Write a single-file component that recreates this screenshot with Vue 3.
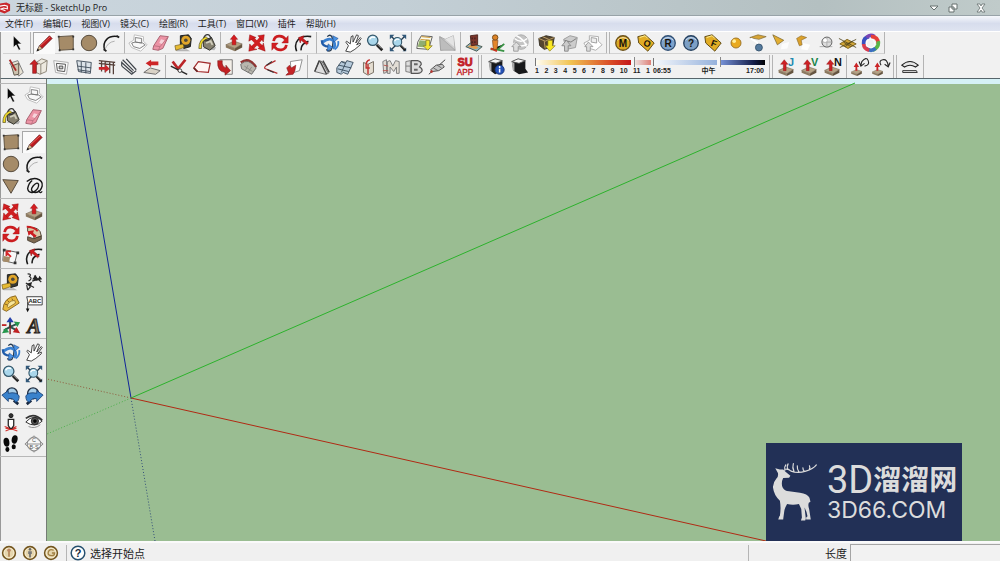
<script setup>
import { ref } from 'vue'

const months = ref(10.3)
const hour = ref(59)
const measure = ref('')

const menus = ['文件(F)', '编辑(E)', '视图(V)', '镜头(C)', '绘图(R)', '工具(T)', '窗口(W)', '插件', '帮助(H)']
const monthLabels = ['1', '2', '3', '4', '5', '6', '7', '8', '9', '10', '11', '1']

const slab = '<path d="M2 13l9-4 9 3-8 5z" fill="#b5a284" stroke="#6a5b48" stroke-width=".6"/><path d="M2 13v3l10 4v-3z" fill="#8b795f"/><path d="M12 17v3l8-4v-4z" fill="#65543f"/>'
const upArrow = '<path d="M11 2l4 5h-2v6H9V7H7z" fill="#d51d20" stroke="#8f1012" stroke-width=".5"/>'
const coin = (t, a, b) => `<circle cx="11" cy="11" r="8" fill="${a}" stroke="${b}" stroke-width="1.5"/><path d="M5 8q6-6 12 0" stroke="#fff" stroke-opacity=".7" fill="none"/><text x="11" y="15" text-anchor="middle" font-family="Liberation Sans, sans-serif" font-size="11" font-weight="bold" fill="#17120a">${t}</text>`
const tag = (t) => `<path d="M2 4l8-2 10 9-7 9L3 11z" fill="#e2ad25" stroke="#57420d"/><path d="M4 5l6-2 3 3" fill="none" stroke="#fff3a0"/><text x="12" y="15" text-anchor="middle" font-family="Liberation Sans, sans-serif" font-size="10" font-weight="bold" fill="#18140a" transform="rotate(20 12 12)">${t}</text>`
const lens = '<path d="M13 13l6 6" stroke="#222" stroke-width="3"/><path d="M13 12l5 5" stroke="#888"/><circle cx="8.5" cy="8" r="5.7" fill="#a9d6eb" stroke="#34576a" stroke-width="1.4"/><path d="M5 7q2-4 6-2" stroke="#fff" fill="none" stroke-width="1.5"/>'
const drop = (t, c) => `<g transform="translate(0 3) scale(.9)">${slab}</g><path d="M8 3l4 5h-2v7H7V8H4z" fill="#ce2024" stroke="#8c1315" stroke-width=".5"/><text x="12" y="10" font-family="Liberation Sans, sans-serif" font-size="12" font-weight="bold" fill="${c}">${t}</text>`
const badge = (d) => `<circle cx="11" cy="11" r="7" fill="#e6d6ae" stroke="#73551f" stroke-width="1.8"/><circle cx="11" cy="11" r="5.4" fill="none" stroke="#f8efd4"/>${d}`

const icons = {
  select: '<path d="M7 3v13l3-3 3 6 2-1-3-6h4z" fill="#080808" stroke="#fff" stroke-width=".6"/>',
  pencil: '<path d="M4 19l2-5L17 3l3 3L9 17z" fill="#bd1b20" stroke="#5b1114" stroke-width=".7"/><path d="M7 14L18 4" stroke="#ef6b61"/><path d="M3 20l3-6 3 3z" fill="#e3c79b" stroke="#333" stroke-width=".5"/><path d="M3 20l1-3 2 2z" fill="#111"/>',
  rect: '<path d="M3 4l16-1v15L4 19z" fill="#a58b68" stroke="#5c4e3d"/><path d="M3 3v2M19 3v2M19 17v2M4 18v2" stroke="#333" stroke-width="2"/>',
  circle: '<circle cx="11" cy="11" r="8.5" fill="#a58b68" stroke="#4d4235"/>',
  arc: '<path d="M4 19C1 9 8 2 19 4" fill="none" stroke="#181818" stroke-width="1.6"/><path d="M4 19Q7 10 15 9" fill="none" stroke="#aaa"/><path d="M3 18l3 2M17 3l3 2" stroke="#222" stroke-width="2"/>',
  polygon: '<path d="M2 4l17 1-8 14z" fill="#a58b68" stroke="#4d4235"/>',
  freehand: '<path d="M3 6q5-4 11-3 7 2 6 8-2 8-9 7-5-2-1-7 4-5 6-2 1 5-6 9-5 1-6-4 1-6 5-9" fill="none" stroke="#171717" stroke-width="1.5"/><path d="M16 16q2 4 4 1" fill="none" stroke="#171717" stroke-width="1.4"/>',
  component: '<path d="M7 2l10 2v5l4 4-7 7-10-4-3-5 5-3z" fill="#fff" stroke="#bbb"/><path d="M8 5l7 1v5l-7-1zM4 11l4-1 8 1 3 2-6 4-7-2z" fill="#f8f8f8" stroke="#777" stroke-width="1"/>',
  eraser: '<path d="M3 14L10 3l9 1-6 13-5 2-6-1z" fill="#ec93a5" stroke="#a45d6b"/><path d="M3 14l7 1 9-11M10 15l-2 4" fill="none" stroke="#bd7281"/><path d="M11 7l4 1-3 4-3-1z" fill="#fff" opacity=".6"/>',
  tape: '<path d="M1 18h13l4 2H3z" fill="#777" opacity=".5"/><path d="M7 3l9-1 3 4-1 9-7 2-4-3z" fill="#393a34" stroke="#171717"/><circle cx="13" cy="8" r="5" fill="#e0a529"/><circle cx="13" cy="8" r="2" fill="#4e493e"/><path d="M1 14l9-2 1 4-9 3z" fill="#e6ba32" stroke="#6c5315" stroke-width=".7"/>',
  paint: '<path d="M6 17l13 2 2-3-6-3z" fill="#777" opacity=".5"/><path d="M7 8l9-3 4 9-6 5-7-4z" fill="#85806f" stroke="#292922"/><path d="M7 8q4 2 9-3M7 7Q8 1 13 2l3 4" fill="none" stroke="#333" stroke-width="1.3"/><path d="M2 17Q2 7 10 4l2 2q-8 2-7 11z" fill="#f2dc28" stroke="#454015" stroke-width=".7"/><path d="M10 11l5-2 2 4" stroke="#d1cebc" fill="none" stroke-width="2"/>',
  push: slab + upArrow,
  move: '<path d="M11 11L5 5M11 11l5-6M11 11l6 5M11 11l-6 6" stroke="#cf2022" stroke-width="4"/><path d="M2 9l1-7 7 3-3 1zM12 3l7-1-1 8-2-3zM12 17l8 3-2-9-1 3zM3 12l-1 8 9-2-4-1z" fill="#d51d20" stroke="#8f1012" stroke-width=".5"/>',
  rotate: '<path d="M4 9c1-7 10-7 13-2M18 13c-1 7-10 7-13 2" fill="none" stroke="#cb1d20" stroke-width="3"/><path d="M20 3v8h-7zM2 19v-8h7z" fill="#d51d20" stroke="#931315" stroke-width=".4"/>',
  offset: '<path d="M4 20C0 10 7 2 20 4M9 19q-1-7 8-10" fill="none" stroke="#1c1c1c" stroke-width="1.7"/><path d="M6 5l6-2-1 3 6 5-2 2-6-5-1 3z" fill="#ce1c20" stroke="#7c1114" stroke-width=".5"/>',
  orbit: '<path d="M8 4q3-3 5 0 3 8-1 15-3 2-5-1" fill="none" stroke="#273b50" stroke-width="1.5"/><path d="M3 10q8-6 12-1 3 5-1 8" fill="none" stroke="#3a80d0" stroke-width="3"/><path d="M2 8q0 7 8 7" fill="none" stroke="#1f5aa8" stroke-width="2.5"/><path d="M14 3l6 3-5 4zM9 12l5 4-6 4z" fill="#4a94e4" stroke="#16458c" stroke-width=".6"/><path d="M20 9q1 6-4 9" fill="none" stroke="#3a80d0" stroke-width="2"/>',
  hand: '<path d="M3 20l3-6-3-4 1-1 4 3 1-8 2-1v7l4-8 2 1-3 8 5-6 1 1-5 7 4-2v2l-6 5-5 3z" fill="#fff" stroke="#222" stroke-width=".9"/>',
  zoom: lens,
  extents: '<path d="M3 3l16 16M19 3L3 19" stroke="#223a50" stroke-width="1.5"/><path d="M2 2h5L2 7zM15 2h5v5zM2 15v5h5zM16 20h4v-4z" fill="#315879"/><g transform="translate(3 3) scale(.85)">' + lens + '</g>',
  prev: '<path d="M14 16l5 4" stroke="#18283f" stroke-width="3"/><circle cx="12" cy="8" r="6" fill="#a5cce8" stroke="#222e40" stroke-width="1.5"/><path d="M1 10l7-5v3q9-2 12 3 0 6-4 7-2-5-8-4v3z" fill="#3982cc" stroke="#173c70" stroke-width=".9"/>',
  next: '<path d="M8 16l-5 4" stroke="#18283f" stroke-width="3"/><circle cx="10" cy="8" r="6" fill="#a5cce8" stroke="#222e40" stroke-width="1.5"/><path d="M21 10l-7-5v3Q5 6 2 11q0 6 4 7 2-5 8-4v3z" fill="#3982cc" stroke="#173c70" stroke-width=".9"/>',
  mapdown: '<path d="M3 10l4-7 12 1-4 14-13-1z" fill="#fafae9" stroke="#555"/><path d="M5 8l10 1-2 7-10-1z" fill="#90ad70"/><path d="M7 4l10 1M6 7l10 1" stroke="#cf962f"/><path d="M12 8h4v6h3l-5 5-5-5h3z" fill="#f5e532" stroke="#796d22" stroke-width=".7"/>',
  terrain: '<path d="M3 4l6 3 9-4 2 16-7-2-9 2z" fill="#cfcfcf" stroke="#aaa"/><path d="M3 4l17 15-16 0z" fill="#bdbdbd" stroke="#999" stroke-width=".7"/><path d="M9 7l9-4 1 12z" fill="#e4e4e4"/>',
  photo: '<path d="M2 15l5-4 13 4-6 5z" fill="#8db4c0" stroke="#435247"/><path d="M4 15l5-3 7 4-3 2z" fill="#e29c4d"/><path d="M7 3l8-1v11l-7 1z" fill="#7b352b" stroke="#4b231d"/><path d="M9 5v2M12 5v2M9 9v2M12 9v2" stroke="#422" stroke-width="1.5"/>',
  person: '<path d="M4 18h8l7-6M10 18l9 2" stroke="#399344" stroke-width="2"/><path d="M4 17l7 3" stroke="#c32" stroke-width="2"/><circle cx="9" cy="5" r="3" fill="#dc8327" stroke="#704515"/><path d="M6 8h6l-1 10H7z" fill="#e4862b" stroke="#7c461a" stroke-width=".7"/>',
  globe: '<circle cx="12" cy="10" r="8" fill="#c4c4c4" stroke="#aaa"/><path d="M5 6q7 6 14 0M4 11q8 6 15 1M7 3q9 4 11 12" fill="none" stroke="#fff" stroke-width="1.6"/><path d="M4 20v-5H2l5-5 5 5H9v5z" fill="#ddd" stroke="#999"/>',
  boxdown: '<path d="M2 6l8-3 9 2-2 10-9 3-5-4z" fill="#56462f" stroke="#332d21"/><path d="M2 6l7 3 10-4M8 9l1 8M6 4l7 3" fill="none" stroke="#c5a56a"/><path d="M12 8h5v6h3l-6 6-5-6h3z" fill="#fae824" stroke="#817521" stroke-width=".7"/>',
  boxup: '<path d="M4 7l7-4 8 2-2 11-10 2z" fill="#ccc" stroke="#999"/><path d="M5 8l7 2 6-4" fill="none" stroke="#777"/><path d="M5 20v-6H2l5-6 5 6H9v6z" fill="#ccc" stroke="#888"/>',
  layersup: '<path d="M7 3l10 1v5l4 4-7 6-10-3-3-5 6-3z" fill="#fff" stroke="#aaa"/><path d="M9 5l6 1v5l-6-1z" fill="#eee" stroke="#999"/><path d="M4 20v-5H2l4-5 5 5H8v5z" fill="#ddd" stroke="#999"/>',
  coinM: coin('M', '#dba923', '#6b511b'),
  tagO: tag('O'),
  coinR: coin('R', '#7da2cc', '#315074'),
  coinQ: coin('?', '#7c9fc5', '#26415f'),
  tagF: tag('F'),
  sun: '<circle cx="11" cy="11" r="5.5" fill="#e9aa20" stroke="#987022"/><circle cx="9" cy="9" r="2" fill="#ffef9b"/>',
  planelight: '<path d="M2 5l9-3 9 2-8 3z" fill="#d7a536" stroke="#77602c" stroke-width=".7"/><path d="M3 6l8 5" stroke="#fff" stroke-width="2"/><circle cx="12" cy="16" r="3.8" fill="#557a9d" stroke="#35536d"/>',
  cone: '<path d="M12 12l8-2-2 7-7 1z" fill="#fff" opacity=".8"/><path d="M2 2l12 6-7 5z" fill="#e3ae31" stroke="#77632c" stroke-width=".8"/>',
  spot: '<path d="M11 11l8 2-3 6-7-1z" fill="#fff" opacity=".9"/><path d="M4 6l5-3 6 2-6 3 1 5-3 1z" fill="#dba12b" stroke="#8b6a2b" stroke-width=".7"/>',
  sphere: '<path d="M4 15h14" stroke="#aaa"/><circle cx="12" cy="10" r="5.5" fill="#ddd" stroke="#555"/><path d="M7 10h10M12 5v10" stroke="#aaa"/><circle cx="10" cy="8" r="2" fill="#fff"/>',
  mesh: '<path d="M2 12l8-5 10 5-9 5z" fill="#d0a536" stroke="#79601e"/><path d="M1 6l19 10M2 16L20 7M6 10l8 5M8 15l8-6" stroke="#4d431f" stroke-width=".9"/>',
  swirl: '<g fill="none" stroke-width="4"><path d="M3 13Q2 5 9 4" stroke="#3a50c0"/><path d="M6 5q4-4 9-1" stroke="#7a45b4"/><path d="M11 4q8 0 8 8" stroke="#e53e38"/><path d="M19 9q1 7-6 10" stroke="#58b548"/><path d="M16 17q-5 4-10 0" stroke="#3a6fc0"/><path d="M9 19q-6-2-6-7" stroke="#d83c50"/></g><path d="M7 8q6-4 8 3M15 10q1 6-5 6M10 16q-6-1-3-8" fill="none" stroke="#fff"/>',
  wallpen: '<path d="M4 7l9-3 6 13-5 4z" fill="#e8e2d4" stroke="#777"/><path d="M6 10l8-3v12l-5 1z" fill="#ccc2ae" stroke="#554c40"/><path d="M4 3l7 12" stroke="#a92725" stroke-width="2"/>',
  wallup: '<path d="M8 6l6-4 6 2-1 12-7 3-4-2z" fill="#ede9df" stroke="#877f71"/><path d="M8 6l5 2 7-4M13 8v11" fill="none" stroke="#877f71"/><path d="M6 3l4 5H8v10H4V8H1z" fill="#c92225" stroke="#711416" stroke-width=".6"/>',
  wallhole: '<path d="M3 4l16 2-2 13-12-2z" fill="#fafafa" stroke="#aaa"/><path d="M6 7l10 1-1 8-8-1z" fill="#fff" stroke="#444"/><path d="M9 10h4v3H9z" fill="#ccc" stroke="#444"/>',
  grid: '<path d="M3 4l16 2-1 12-13-2z" fill="#dce3e9" stroke="#3e4b58"/><path d="M8 5v12M13 6v12M4 10l15 2M4 14l14 2" stroke="#3e4b58"/>',
  fence: '<path d="M2 4l18 2M2 7l18 2M5 4v12M9 5v12M14 6v12M18 6v13" stroke="#554039" stroke-width="1.4"/><path d="M2 11h7V8l5 5-5 4v-3H2z" fill="#ca272b"/>',
  stairs: '<path d="M3 10l11 9 5-4M3 6l12 11M4 3l12 12M8 2l11 12M3 10V5" fill="none" stroke="#3e4349" stroke-width="1.3"/>',
  plate: '<path d="M2 17l7-5 11 3-5 4z" fill="#dad3c7" stroke="#666"/><path d="M4 7l6-4v2h8v4h-8v2z" fill="#cd2527"/>',
  check: '<path d="M4 5l6 8 8-10" fill="none" stroke="#bb2528" stroke-width="3"/><path d="M2 10l18 9" stroke="#262626" stroke-width="1.5"/><circle cx="12" cy="15" r="2" fill="#fff" stroke="#333"/>',
  face: '<path d="M2 12l5-7 13 2-2 10-12-1z" fill="#fff5f2" stroke="#a12a2b" stroke-width="1.3"/><path d="M2 12l4 4" stroke="#6b2222" stroke-width="2"/>',
  bend: '<path d="M5 3h14v16h-7" fill="#f3efe8" stroke="#555" stroke-width=".8"/><path d="M3 4h5q-1 6 4 8V9l5 6-6 5v-3Q2 16 3 4z" fill="#c22123" stroke="#751416" stroke-width=".6"/>',
  arch: '<path d="M3 8q8-8 17 4l-5 7-11-6z" fill="#b9b7ae" stroke="#666"/><path d="M3 6q9-7 17 5" fill="none" stroke="#8f3432" stroke-width="2.4"/><path d="M7 10l9 6M11 9l-3 6M15 11l-4 6" stroke="#8a8a84"/>',
  angle: '<path d="M16 4L5 10q-2 2 0 3l13 5" fill="none" stroke="#b32a2b" stroke-width="1.3"/><path d="M12 5L6 9M7 14l7 3" stroke="#333" stroke-width="1.2"/>',
  fold: '<path d="M7 5l13-2-3 12-9 3z" fill="#fff" stroke="#888"/><path d="M3 12l3-3 2 3 5-3-1 6-2 4-8 1 3-3z" fill="#c52527" stroke="#7d1518" stroke-width=".6"/>',
  boards: '<path d="M3 16L8 4l3 1 7 13-3 1z" fill="#dedede" stroke="#666"/><path d="M8 4l-5 12M9 5l7 14M12 4l7 13" stroke="#444" stroke-width="1.6"/>',
  windows: '<path d="M2 12l5-7 5 1 1-2 7 2-6 13-5-2-2 2-5-2z" fill="#b7cbdc" stroke="#394c5d"/><path d="M12 6l-5 11M4 9l14 3M3 13l12 3M7 5l4 2" stroke="#394c5d"/>',
  wallcut: '<path d="M6 6l5 2 6-3v12l-6 3-5-3z" fill="#e4ddd1" stroke="#70675c"/><path d="M11 8v11M13 3q-5 1-4 9h4" fill="none" stroke="#c13331" stroke-width="1.6"/>',
  blockM: '<path d="M2 5l4-2v14l-3 1z" fill="#e2ddd5" stroke="#777"/><path d="M7 18V5l3-1 3 6 3-6 4 1v13h-3v-7l-3 5-4-5v7z" fill="#e2ddd5" stroke="#777"/><path d="M2 15h6M3 9l5 1" stroke="#b75650"/>',
  blockB: '<path d="M2 5l5-1v13l-5-1zM2 10h5" fill="#ddd" stroke="#777"/><path d="M8 4h7q4 1 4 4l-2 3q3 1 3 4-1 3-5 3H8z" fill="#ddd" stroke="#555" stroke-width="1.3"/><path d="M11 7h4v2h-4zM11 13h4v2h-4z" fill="#666"/>',
  rope: '<path d="M2 19L20 3" stroke="#333"/><path d="M4 14l6-5 7-1 2 3-6 4-7 1z" fill="#c7c7c7" stroke="#4c4c4c"/><path d="M7 12l5 3M11 9l5 3" stroke="#666"/><circle cx="5" cy="16" r="1.5" fill="#b63833"/>',
  suapp: '<text x="11" y="10" text-anchor="middle" font-family="Liberation Sans, sans-serif" font-size="12" font-weight="bold" fill="#c32026" stroke="#c32026" stroke-width=".9">SU</text><text x="11" y="20" text-anchor="middle" font-family="Liberation Sans, sans-serif" font-size="9" fill="#c32026" stroke="#c32026" stroke-width=".4">APP</text>',
  cubeinfo: '<path d="M3 5l7-3 8 2v11l-8 4-5-4z" fill="#18191b"/><path d="M3 5l7-3 8 2-7 3z" fill="#f5f5f5" stroke="#555"/><path d="M3 5l3 2v9l-2-2z" fill="#aaa"/><circle cx="15" cy="14" r="5" fill="#2552b7" stroke="#183577"/><path d="M15 10v2M15 13v4" stroke="#fff" stroke-width="1.7"/>',
  cubeshadow: '<path d="M3 5l7-3 8 2v9l3 4-10 2-6-4z" fill="#18191b"/><path d="M3 5l7-3 8 2-7 3z" fill="#f5f5f5" stroke="#555"/><path d="M3 5l3 2v9l-2-2z" fill="#aaa"/>',
  dropJ: drop('J', '#1f8ab0'),
  dropV: drop('V', '#168347'),
  dropN: drop('N', '#111'),
  curveL: '<g transform="translate(0 8) scale(.65)">' + slab + '</g><path d="M7 6l3 5H8v4H6v-4H4z" fill="#cb2427"/><path d="M12 9l1-4q5-6 7-1t-4 6M10 5l2 5 4-3" fill="none" stroke="#252525" stroke-width="1.2"/>',
  curveR: '<g transform="translate(0 8) scale(.65)">' + slab + '</g><path d="M7 6l3 5H8v4H6v-4H4z" fill="#cb2427"/><path d="M11 9q-3-5 2-6t6 7M15 8l4 3 2-5" fill="none" stroke="#252525" stroke-width="1.2"/>',
  soft: '<path d="M2 9q9-8 18 0l-3 2q-6-4-12 0z" fill="#e7e7e7" stroke="#222" stroke-width="1.2"/><path d="M3 15h15l1 2H3z" fill="#eee" stroke="#222"/>',
  follow: '<path d="M4 14l6 2 9-3v4l-8 4-7-3z" fill="#7d6850" stroke="#463a2e"/><path d="M4 4q14-2 15 9l-8 3Q11 9 4 8z" fill="#dbc8a7" stroke="#44392c"/><path d="M3 3q8 0 12 5" fill="none" stroke="#cb1d20" stroke-width="2"/><path d="M4 8l7-1-1 3 4 3-2 2-5-4-2 2z" fill="#cb1d20"/>',
  scale: '<path d="M3 4l15 3-3 12L2 16z" fill="#f8f8f8" stroke="#555"/><path d="M3 11l7 1-1 6-7-1z" fill="#a58b68"/><path d="M11 12l-5-5M6 11V6h5" stroke="#d22629" fill="none" stroke-width="2"/><path d="M2 3h3v3H2M17 6h3v3h-3M14 17h3v3h-3" fill="#333"/>',
  dimension: '<path d="M4 20l4-5M2 12l9 5M11 4l8 7M9 10l9-3M4 2q5 0 2 3 4 2-1 5M3 14l1 6" fill="none" stroke="#282828" stroke-width="1.3"/><path d="M13 3l2 7-6-2zM3 13l6-2-2 6zM17 4l3 4-5 1z" fill="#222"/>',
  protractor: '<path d="M2 17Q3 4 16 2l4 8-14 9z" fill="#e7b83c" stroke="#82601f"/><path d="M7 14q0-6 8-7l1 3-8 5z" fill="#f8e69b" stroke="#82601f" stroke-width=".8"/><path d="M4 11l3 1M7 7l2 2M12 5l1 2" stroke="#82601f"/>',
  label: '<path d="M3 3h17v9H5z" fill="#fff" stroke="#333"/><path d="M4 9v9" stroke="#333"/><path d="M2 16h4l-2 4z" fill="#111"/><text x="12" y="10" text-anchor="middle" font-family="Liberation Sans, sans-serif" font-size="6.5" font-weight="bold" fill="#222">ABC</text>',
  axes: '<path d="M10 13V6M10 12l8 4M10 12l7-3M10 12l-7 4" stroke="#2a514c" stroke-width="2.2"/><path d="M6 7l4-6 4 6z" fill="#233fa9"/><path d="M10 10v10" stroke="#7a1a1a" stroke-width="1.5"/><path d="M17 12l4 7-8-1z" fill="#bf2223"/><path d="M14 6l7 1-3 5zM5 13l-4 6 8-1z" fill="#25964c"/><path d="M1 10h5" stroke="#bf2223" stroke-width="2"/>',
  text3d: '<text x="11" y="19" text-anchor="middle" font-family="Liberation Serif, serif" font-size="22" font-weight="bold" font-style="italic" fill="#8d7c66" stroke="#2a251f" stroke-width="1.2">A</text>',
  camera: '<path d="M4 16l14 5M17 16L5 21M5 18h12" stroke="#d13532" stroke-width="1.2"/><circle cx="11" cy="4" r="2.2" fill="#333" stroke="#111"/><path d="M8 8h6v7l-2 3h-2l-2-3z" fill="#fff" stroke="#222" stroke-width="1.4"/>',
  eye: '<path d="M2 11q9-10 18-1-8 8-18 1z" fill="#fff" stroke="#222"/><path d="M2 7q9-7 18 2" fill="none" stroke="#333" stroke-width="2"/><circle cx="12" cy="10" r="4" fill="#555" stroke="#222"/><circle cx="12" cy="10" r="2" fill="#050505"/><path d="M5 16q7 3 13-2" stroke="#888" fill="none"/>',
  feet: '<ellipse cx="6" cy="9" rx="3.2" ry="5" fill="#080808" transform="rotate(-8 6 9)"/><ellipse cx="7" cy="17" rx="2.2" ry="2.7" fill="#080808"/><ellipse cx="15" cy="6" rx="3.2" ry="4.7" fill="#080808" transform="rotate(12 15 6)"/><ellipse cx="14" cy="14" rx="2.3" ry="2.8" fill="#080808"/>',
  section: '<circle cx="11" cy="11" r="7.5" fill="#f7f7f7" stroke="#888"/><path d="M1 11L11 2l10 9-10 9zM3 11h16" fill="none" stroke="#888"/><text x="11" y="9" text-anchor="middle" font-family="Liberation Sans, sans-serif" font-size="6" fill="#555">C</text><text x="11" y="17" text-anchor="middle" font-family="Liberation Sans, sans-serif" font-size="6" fill="#555">B-S</text>',
  geo: badge('<path d="M11 8v7" stroke="#a77545" stroke-width="1.5"/><circle cx="11" cy="8" r="2" fill="#bd8a67"/>'),
  credit: badge('<circle cx="11" cy="7" r="1.4" fill="#666"/><path d="M9 9h4v3h-1v4h-2v-4H9z" fill="#777"/>'),
  sign: badge('<path d="M14 8q-5-2-6 2t4 4q3 0 3-3h-3" fill="none" stroke="#a18043" stroke-width="1.4"/>'),
  help: '<circle cx="11" cy="11" r="7.5" fill="#fff" stroke="#254f6e" stroke-width="1.6"/><text x="11" y="15" text-anchor="middle" font-family="Liberation Sans, sans-serif" font-size="12" font-weight="bold" fill="#172d40">?</text>'
}

const rowOne = [
  { w: 28, items: ['select'] },
  { w: 94, items: ['pencil', 'rect', 'circle', 'arc'], active: 'pencil' },
  { w: 96, items: ['component', 'eraser', 'tape', 'paint'] },
  { w: 96, items: ['push', 'move', 'rotate', 'offset'] },
  { w: 95, items: ['orbit', 'hand', 'zoom', 'extents'] },
  { w: 49, items: ['mapdown', 'terrain'] },
  { w: 73, items: ['photo', 'person', 'globe'] },
  { w: 76, items: ['boxdown', 'boxup', 'layersup'], end: true },
  { w: 275, items: ['coinM', 'tagO', 'coinR', 'coinQ', 'tagF', 'sun', 'planelight', 'cone', 'spot', 'sphere', 'mesh', 'swirl'] }
]
const rowTwoLeft = [
  { w: 163, items: ['wallpen', 'wallup', 'wallhole', 'grid', 'fence', 'stairs', 'plate'] },
  { w: 142, items: ['check', 'face', 'bend', 'arch', 'angle', 'fold'] },
  { w: 144, items: ['boards', 'windows', 'wallcut', 'blockM', 'blockB', 'rope'] },
  { w: 30, items: ['suapp'], end: true }
]
const rowTwoRight = [
  { w: 74, items: ['dropJ', 'dropV', 'dropN'] },
  { w: 50, items: ['curveL', 'curveR'], end: true },
  { w: 27, items: ['soft'] }
]
const palette = [
  ['select', 'component', 'paint', 'eraser'],
  ['rect', 'pencil', 'circle', 'arc', 'polygon', 'freehand'],
  ['move', 'push', 'rotate', 'follow', 'scale', 'offset'],
  ['tape', 'dimension', 'protractor', 'label', 'axes', 'text3d'],
  ['orbit', 'hand', 'zoom', 'extents', 'prev', 'next'],
  ['camera', 'eye', 'feet', 'section']
]
</script>

<template>
  <div class="app">
    <header class="title">
      <svg class="logo" viewBox="0 0 12 12" aria-hidden="true">
        <path d="M0 1l7-1 4 2v7l-6 3-5-2z" fill="#c9282d" />
        <path d="M0 4l5-1 3 1v3L4 6 1 7l5 2" fill="none" stroke="#fff" stroke-width="1.2" />
      </svg>
      <h1>无标题 - SketchUp Pro</h1>
      <div class="controls">
        <button aria-label="最小化"><svg viewBox="0 0 10 10"><path d="M1 3h8L5 7z" fill="#fff" stroke="#66706f" /></svg></button>
        <button aria-label="还原"><svg viewBox="0 0 10 10"><path d="M4 1h5v5H4zM1 4h5v5H1z" fill="#fff" stroke="#66706f" /></svg></button>
        <button aria-label="关闭"><svg viewBox="0 0 10 10"><path d="M1 1h3l1 2 1-2h3L6 5l3 4H6L5 7 4 9H1l3-4z" fill="#fff" stroke="#66706f" stroke-width=".8" /></svg></button>
      </div>
    </header>
    <nav class="menu">
      <button v-for="m in menus" :key="m">{{ m }}</button>
    </nav>

    <div class="bar first">
      <div v-for="(g, i) in rowOne" :key="i" class="group" :class="{ end: g.end }" :style="{ width: g.w + 'px' }">
        <button v-for="n in g.items" :key="n" class="tool" :class="{ active: g.active === n }" :aria-label="n">
          <svg viewBox="0 0 22 22" v-html="icons[n]"></svg>
        </button>
      </div>
    </div>
    <div class="bar second">
      <div v-for="(g, i) in rowTwoLeft" :key="i" class="group" :class="{ end: g.end }" :style="{ width: g.w + 'px' }">
        <button v-for="n in g.items" :key="n" class="tool" :aria-label="n">
          <svg viewBox="0 0 22 22" v-html="icons[n]"></svg>
        </button>
      </div>
      <div class="group shadows">
        <button v-for="n in ['cubeinfo', 'cubeshadow']" :key="n" class="tool" :aria-label="n">
          <svg viewBox="0 0 22 22" v-html="icons[n]"></svg>
        </button>
        <div class="slider month">
          <input v-model="months" type="range" min="0" max="12" step="0.1" aria-label="月份">
          <div class="ticks"><span v-for="(m, i) in monthLabels" :key="i">{{ m }}</span></div>
        </div>
        <div class="slider time">
          <input v-model="hour" type="range" min="0" max="100" aria-label="时间">
          <div class="ticks"><span>06:55</span><span>中午</span><span>17:00</span></div>
        </div>
      </div>
      <div v-for="(g, i) in rowTwoRight" :key="'r' + i" class="group" :class="{ end: g.end }" :style="{ width: g.w + 'px' }">
        <button v-for="n in g.items" :key="n" class="tool" :aria-label="n">
          <svg viewBox="0 0 22 22" v-html="icons[n]"></svg>
        </button>
      </div>
    </div>

    <main class="work">
      <aside class="palette">
        <div v-for="(g, i) in palette" :key="i" class="block">
          <button v-for="n in g" :key="n" class="tool" :class="{ active: n === 'pencil' }" :aria-label="n">
            <svg viewBox="0 0 22 22" v-html="icons[n]"></svg>
          </button>
        </div>
      </aside>
      <section class="canvas">
        <svg class="axes" viewBox="47 79 953 462" preserveAspectRatio="xMinYMin slice" aria-hidden="true">
          <g fill="none" stroke-width="1">
            <path d="M131 398L77 79" stroke="#10249a" />
            <path d="M131 398L855 83" stroke="#2cb22c" />
            <path d="M131 398L766 541" stroke="#b02a14" />
            <path d="M131 398l24 143" stroke="#34507a" stroke-dasharray="1 2" />
            <path d="M131 398L47 379" stroke="#8f5a3c" stroke-dasharray="1 2" />
            <path d="M131 398L47 434" stroke="#4bb04b" stroke-dasharray="1 2" />
          </g>
        </svg>
        <div class="brand">
          <svg class="deer" viewBox="20 18 140 185" aria-hidden="true">
            <path d="M30 38l14 4h10l8 8 14 11-4 6-18 1q-7 14-2 28 6 12 20 12l33 5q23 3 29 15l3 12-5 3q-3 9 1 19l5 32h-14v-6l4-4q-3-16-9-26l4 34-2 5h-13l3-9-2-26-7-15q-18 4-36 0-8 13-9 24l-3 23H39l3-9 2-2q4-24 0-46-18-16-21-40-1-14 11-28 6-6 4-16z" fill="#dcdcdc" />
            <path d="M59 45q-3-9 3-17M61 41q10-1 17 6 20 8 45 0 22-6 32-19M69 42q-5-9 0-17M87 48q-6-12-2-24M102 49q-6-8-5-18M118 48q-4-5-4-11M133 43q4-7 1-12" fill="none" stroke="#dcdcdc" stroke-width="3.6" stroke-linecap="round" />
          </svg>
          <div class="words">
            <div class="name"><span class="latin">3D</span><span>溜溜网</span></div>
            <div class="site">3D66.COM</div>
          </div>
        </div>
      </section>
    </main>

    <footer class="status">
      <div class="badges">
        <button v-for="n in ['geo', 'credit', 'sign']" :key="n" class="tool" :aria-label="n">
          <svg viewBox="0 0 22 22" v-html="icons[n]"></svg>
        </button>
      </div>
      <div class="hint">
        <button class="tool" aria-label="help"><svg viewBox="0 0 22 22" v-html="icons.help"></svg></button>
        <span>选择开始点</span>
      </div>
      <label for="length">长度</label>
      <input id="length" v-model="measure" type="text">
    </footer>
  </div>
</template>

<style>
body { margin: 0; }
</style>

<style scoped>
.app {
  min-height: 100vh;
  display: flex;
  flex-direction: column;
  box-sizing: border-box;
  background: #f0f0f0;
  font-family: "Open Sans", "Noto Sans CJK SC", sans-serif;
  color: #1c1c1c;
  overflow: hidden;
}
button { border: 0; padding: 0; background: none; font: inherit; color: inherit; }
.title {
  display: flex;
  align-items: center;
  height: 15px;
  gap: 5px;
  background: linear-gradient(90deg, #cbd6de, #c3cfd6 40%, #b4c0c1 82%, #c0cbca);
  border-bottom: 1px solid #98a3a8;
}
.logo { width: 11px; height: 12px; }
h1 { margin: 0; flex: 1; font-size: 9px; line-height: 15px; font-weight: 400; }
.controls { display: flex; gap: 9px; padding-right: 14px; }
.controls button { display: flex; }
.controls button:last-child { margin-left: 9px; }
.controls svg { width: 10px; height: 10px; }
.menu {
  display: flex;
  gap: 10px;
  height: 15px;
  padding-left: 5px;
  background: linear-gradient(#f6f8fc, #d7dded 50%, #dfe4f1);
  border-bottom: 1px solid #fff;
  font-size: 9px;
  line-height: 14px;
}
.bar { display: flex; box-sizing: border-box; background: #f1f1f1; border-left: 1px solid #999; }
.first { height: 22px; padding-left: 2px; }
.second { height: 25px; padding: 1px 0 0 2px; border-bottom: 1px solid #56656b; }
.group {
  display: flex;
  align-items: center;
  flex: none;
  box-sizing: border-box;
  padding: 0 2px;
  border-right: 1px solid #b4b4b4;
}
.first .group { border-bottom: 1px solid #d2d2d2; }
.group.end { border-right: 4px double #b4b4b4; }
.tool { flex: 1; min-width: 0; display: flex; justify-content: center; align-items: center; height: 22px; }
.tool svg { width: 20px; height: 20px; flex: none; }
.tool.active { background: #fafafa; box-shadow: inset 1px 1px #a8a8a8; }
.group.shadows { width: 291px; border-right: 4px double #b4b4b4; }
.shadows .tool { flex: none; width: 23px; }
.slider { display: flex; flex-direction: column; margin-left: 3px; }
.month { width: 115px; margin-left: 5px; }
.time { width: 111px; }
.slider input {
  appearance: none;
  width: 100%;
  height: 8px;
  margin: 0;
  background: linear-gradient(90deg, #fffdf3, #f1c352 30%, #d94b25 65%, #c3161b 83%, #eee 84%, #de8178) center / 100% 5px no-repeat;
  border-left: 1px solid #777;
}
.time input { background: linear-gradient(90deg, #f5f8fc, #95b1dc 57%, #7591d7 60%, #141d48 90%, #020305) center / 100% 5px no-repeat; }
.slider input::-webkit-slider-thumb { appearance: none; width: 4px; height: 10px; background: #f6f6f6; border-right: 1px solid #888; }
.ticks { display: flex; justify-content: space-between; font: 700 7px/9px "Liberation Sans", "Noto Sans CJK SC", sans-serif; white-space: nowrap; }
.work { flex: 1; display: flex; min-height: 0; }
.palette { flex: none; width: 47px; box-sizing: border-box; padding-top: 4px; border-left: 1px solid #999; border-right: 1px solid #747c74; }
.block { display: grid; grid-template-columns: repeat(2, 23px); grid-auto-rows: 22px; padding: 2px 0 1px; border-bottom: 1px solid #b7b7b7; margin-left: -2px; }
.block:first-child { padding: 0; border-top: 1px solid #b7b7b7; }
.canvas {
  position: relative;
  flex: 1;
  min-width: 0;
  background: linear-gradient(#d5f1f6 5px, #9abd92 5px);
}
.axes { position: absolute; inset: 0; width: 100%; height: 100%; }
.brand {
  position: absolute;
  right: 38px;
  bottom: 0;
  display: flex;
  align-items: center;
  gap: 9px;
  box-sizing: border-box;
  width: 196px;
  height: 98px;
  padding-left: 6px;
  background: #223056;
  color: #dcdcdc;
}
.deer { width: 46px; height: 62px; flex: none; }
.words { white-space: nowrap; }
.name { display: flex; align-items: flex-start; font: 700 28px/32px "Noto Sans CJK SC", sans-serif; }
.latin { font: 400 38px/36px Roboto, sans-serif; }
.site { font: 400 23px/24px Inter, sans-serif; }
.status {
  display: flex;
  align-items: center;
  height: 20px;
  box-sizing: border-box;
  border-top: 2px solid #fafafa;
  font-size: 11px;
  padding-top: 2px;
}
.badges { display: flex; margin-left: -2px; }
.badges .tool { flex: none; width: 21px; height: 18px; }
.hint { flex: 1; display: flex; align-items: center; gap: 2px; height: 16px; margin-left: 5px; border-left: 1px solid #b5b5b5; border-right: 1px solid #b5b5b5; }
.hint .tool { flex: none; width: 21px; }
.status label { width: 98px; text-align: right; padding-right: 3px; box-sizing: content-box; }
.status input { box-sizing: border-box; width: 150px; height: 18px; border: 1px solid #a5a5a5; border-right: 0; border-bottom: 0; background: #f2f2f2; font: inherit; }
</style>
